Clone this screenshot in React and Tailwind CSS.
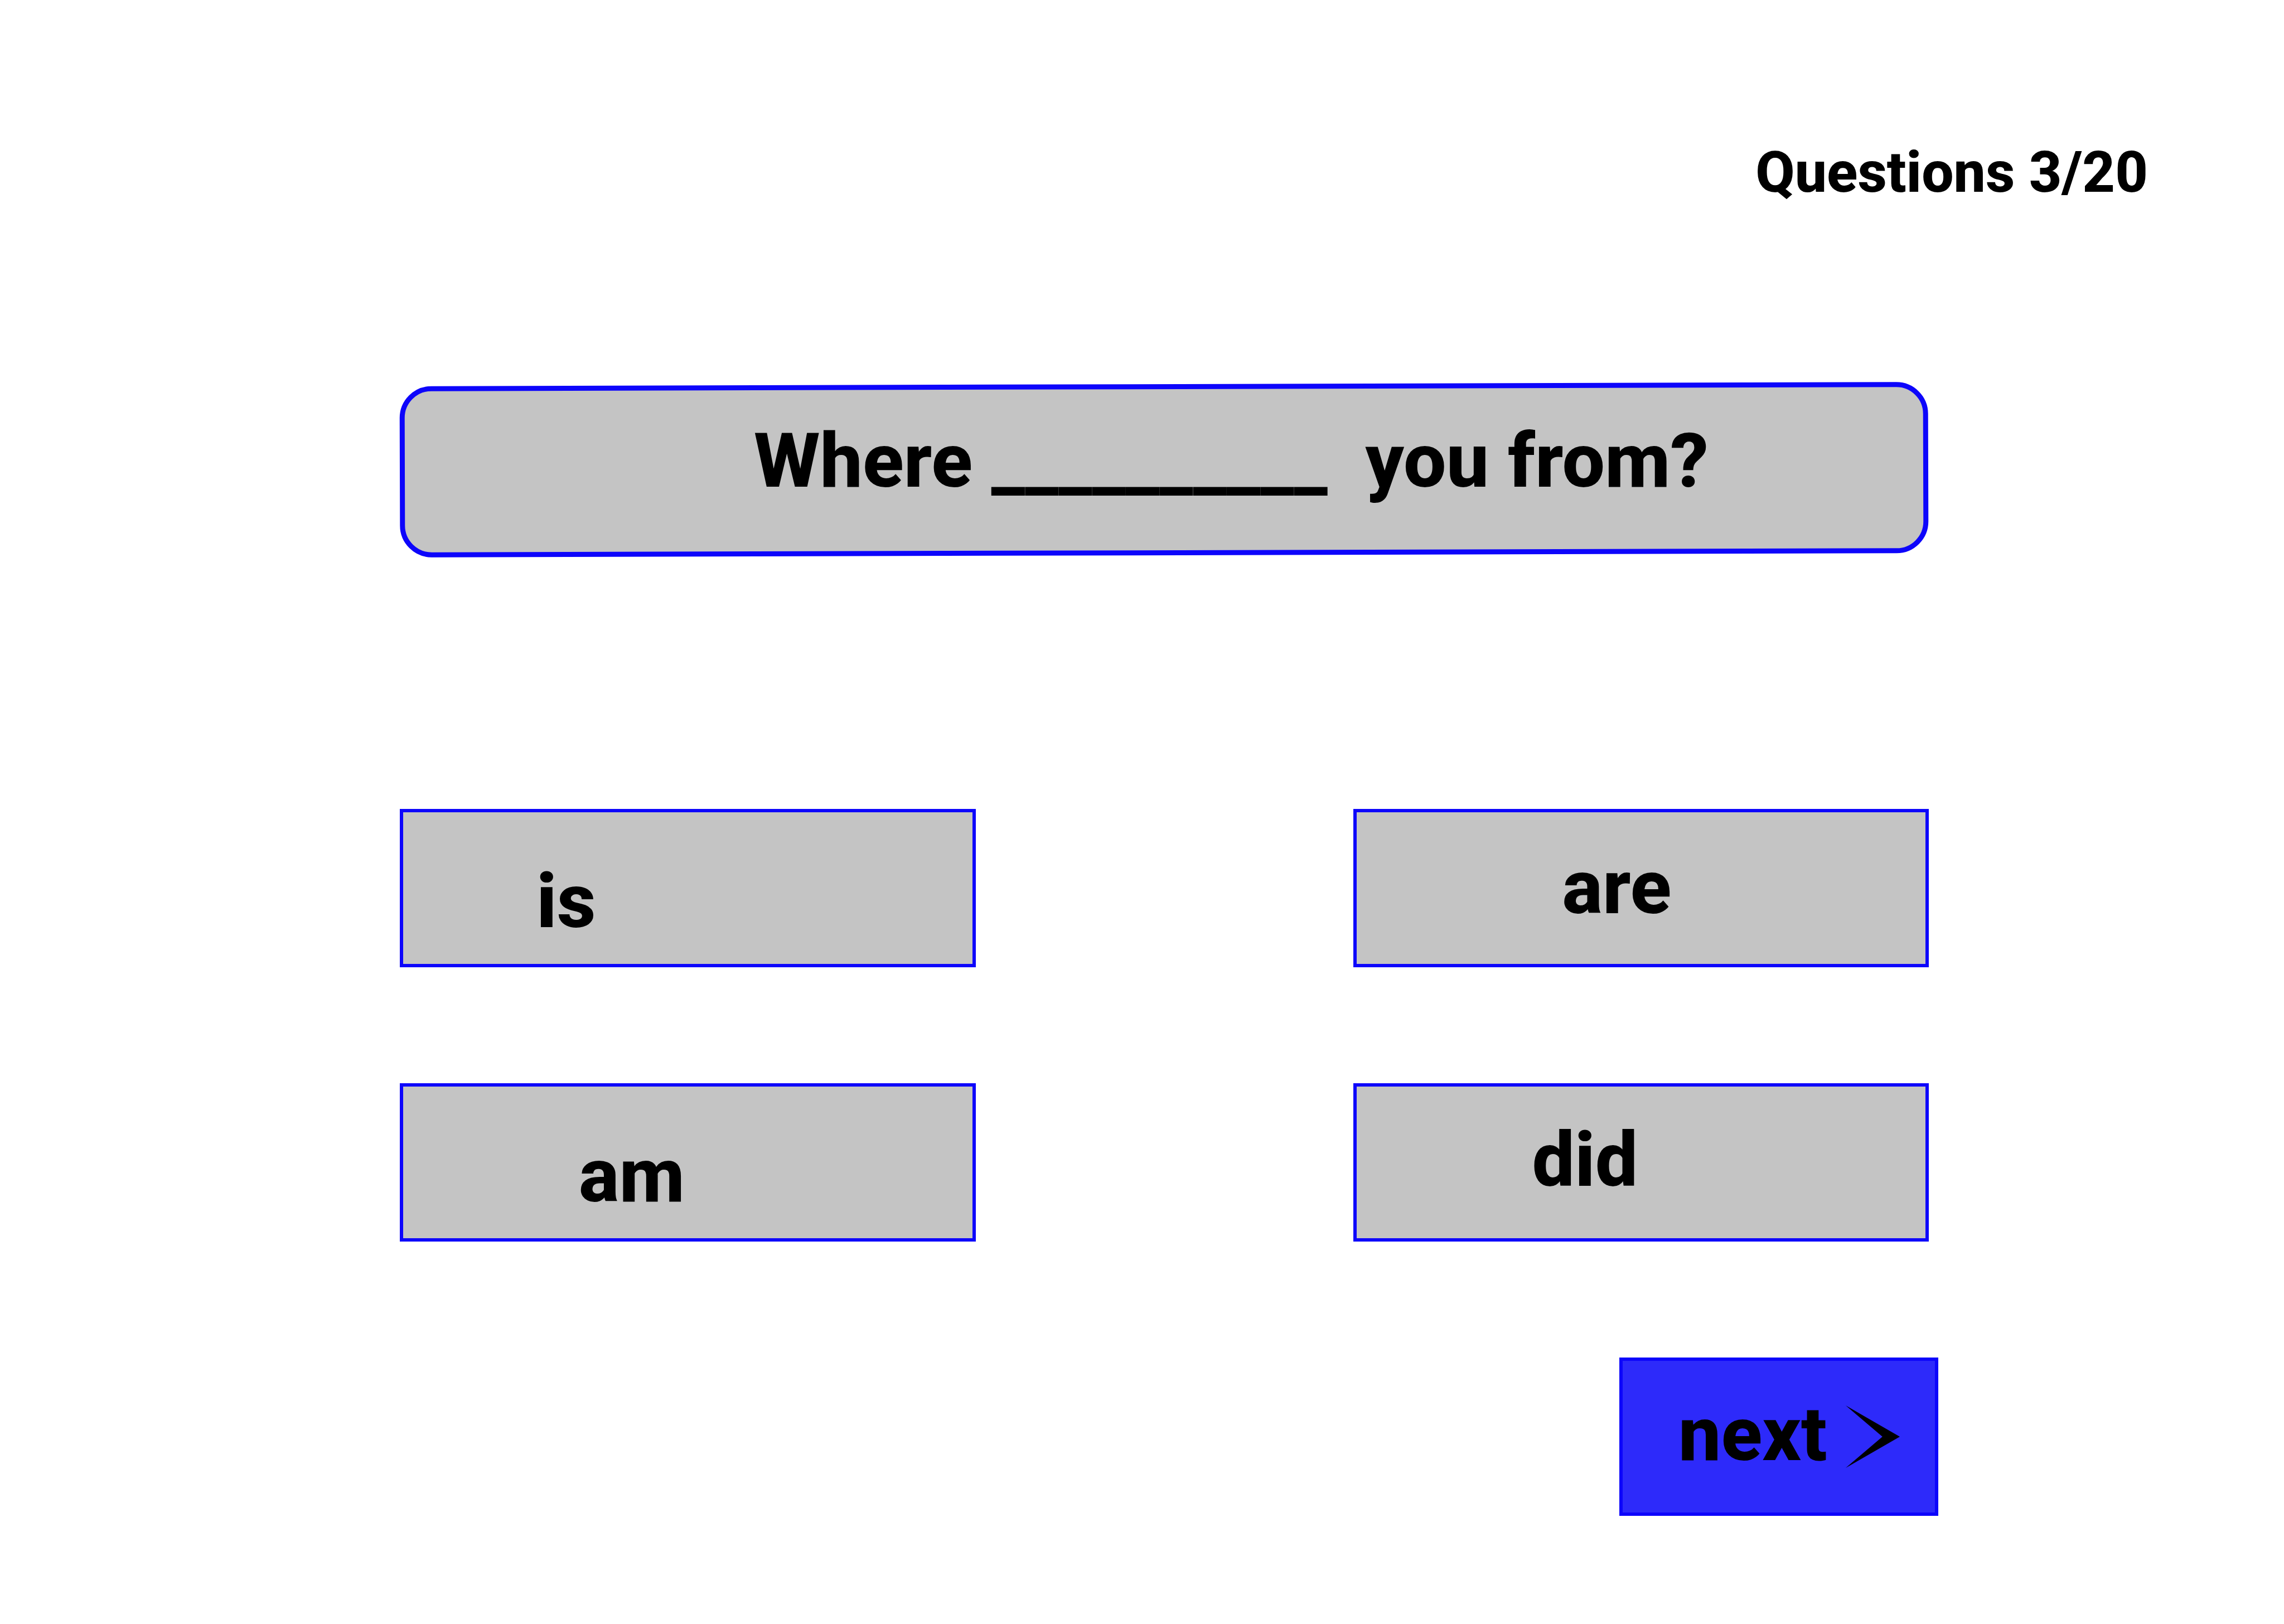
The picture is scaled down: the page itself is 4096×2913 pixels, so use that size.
const options = [
  { label: "is", inset: "pt-[80px] pl-[239px]" },
  { label: "are", inset: "pt-[55px] pl-[369px]" },
  { label: "am", inset: "pt-[80px] pl-[315px]" },
  { label: "did", inset: "pt-[52px] pl-[315px]" },
];

function Chevron() {
  return (
    <svg aria-hidden="true" viewBox="0 0 137 158" className="mt-[28px] ml-[34px] h-[112px] w-[97px] shrink-0">
      <path d="M0 0L137 79L0 158L93 79Z" fill="#000" />
    </svg>
  );
}

export default function App() {
  return (
    <main className="flex min-h-screen flex-col bg-white pt-[249px] pb-[190px] font-['Roboto',sans-serif] font-extrabold text-black">
      <p className="pr-[244px] text-right text-[102px] leading-[120px]">Questions 3/20</p>

      <section className="mt-[320px] pr-[638px] pl-[717px]">
        <div className="relative min-h-[307px] pt-[58px] pl-[635px]">
          <div className="absolute inset-0 -rotate-[0.16deg] rounded-[57px] border-[9px] border-[#0d05fb] bg-[#c4c4c4]" />
          <h1 className="relative text-[136px] leading-[160px] whitespace-pre">
            {"Where __________\u00a0 you from?"}
          </h1>
        </div>
      </section>

      <section className="mt-[455px] grid grid-cols-2 gap-x-[677px] gap-y-[208px] pr-[637px] pl-[717px]">
        {options.map((option) => (
          <button
            key={option.label}
            type="button"
            className={`flex min-h-[284px] items-start border-[6px] border-[#0d05fb] bg-[#c4c4c4] text-[136px] leading-[160px] ${option.inset}`}
          >
            {option.label}
          </button>
        ))}
      </section>

      <div className="mt-[208px] flex justify-end pr-[620px]">
        <button
          type="button"
          className="flex min-h-[284px] w-[572px] items-start border-[6px] border-[#0d05fb] bg-[#2d2afa] pt-[52px] pl-[100px] text-[136px] leading-[160px]"
        >
          next
          <Chevron />
        </button>
      </div>
    </main>
  );
}
